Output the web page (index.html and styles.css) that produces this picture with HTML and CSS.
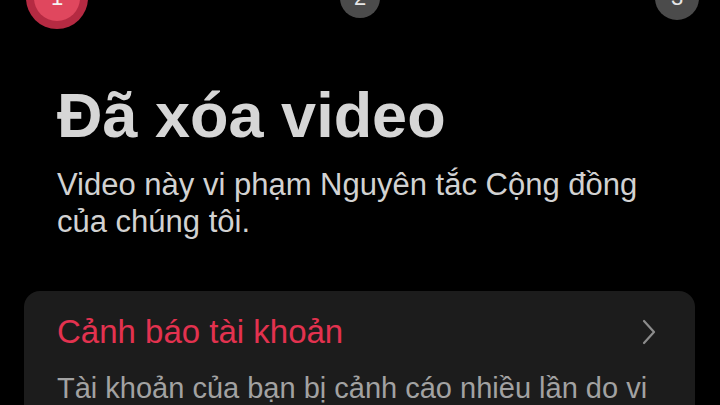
FILE: index.html
```html
<!DOCTYPE html>
<html lang="vi">
<head>
<meta charset="utf-8">
<link rel="stylesheet" href="styles.css">
</head>
<body>
<div class="steps">
  <div class="step step-active"><span class="step-inner">1</span></div>
  <div class="step step-gray step-mid">2</div>
  <div class="step step-gray step-last">3</div>
</div>
<main class="content">
  <h1 class="title">Đã xóa video</h1>
  <p class="subtitle">Video này vi phạm Nguyên tắc Cộng đồng<br>của chúng tôi.</p>
</main>
<section class="card">
  <div class="card-head">
    <h2 class="card-title">Cảnh báo tài khoản</h2>
    <svg class="chev" width="16" height="26" viewBox="0 0 16 26"><path d="M3 2 L13 13 L3 24" fill="none" stroke="#8c8c8c" stroke-width="2.2" stroke-linecap="round" stroke-linejoin="round"/></svg>
  </div>
  <p class="card-text">Tài khoản của bạn bị cảnh cáo nhiều lần do vi phạm Nguyên tắc Cộng đồng.</p>
</section>
</body>
</html>
```
FILE: styles.css
```css
html, body {
  margin: 0;
  padding: 0;
  background: #000;
  width: 720px;
  height: 405px;
  overflow: hidden;
  font-family: "Liberation Sans", Arial, sans-serif;
}
.steps {
  display: flex;
  align-items: center;
  height: 62px;
  margin-top: -33px;
  padding-left: 26px;
}
.step {
  flex: none;
  border-radius: 50%;
  display: flex;
  align-items: center;
  justify-content: center;
  color: #e6e6e6;
  font-size: 22px;
}
.step-active {
  width: 62px;
  height: 62px;
  background: #b52a42;
}
.step-inner {
  width: 46px;
  height: 46px;
  border-radius: 50%;
  background: #e0475e;
  display: flex;
  align-items: center;
  justify-content: center;
  color: #f4f4f4;
}
.step-gray {
  width: 40px;
  height: 40px;
  background: #4b4b4b;
}
.step-mid {
  margin-left: 252px;
}
.step-last {
  width: 44px;
  height: 44px;
  margin-left: 275px;
}
.content {
  padding-left: 57px;
}
.title {
  margin: 50px 0 0;
  font-size: 63px;
  line-height: 72px;
  font-weight: 700;
  color: #d6d6d6;
}
.subtitle {
  margin: 15px 0 0;
  font-size: 31px;
  line-height: 37px;
  color: #d2d2d2;
}
.card {
  margin: 51px 25px 0 24px;
  background: #1c1c1c;
  border-radius: 16px;
  padding: 21px 38px 0 33px;
  height: 200px;
}
.card-head {
  display: flex;
  align-items: center;
  justify-content: space-between;
}
.card-title {
  margin: 0;
  font-size: 33px;
  line-height: 40px;
  font-weight: 400;
  color: #e3324f;
}
.chev {
  display: block;
}
.card-text {
  margin: 17px 0 0;
  font-size: 29px;
  line-height: 38px;
  color: #a2a2a2;
}
```
